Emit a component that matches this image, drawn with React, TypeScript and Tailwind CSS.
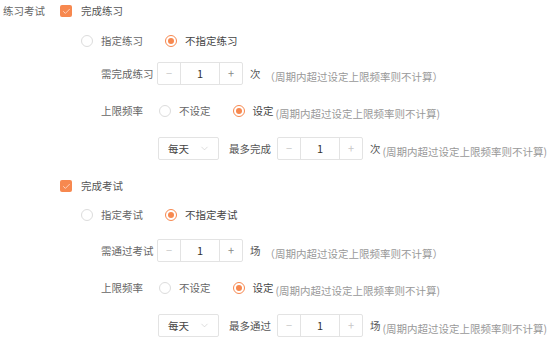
import { Check, ChevronDown } from 'lucide-react';

const font = { fontFamily: '"Noto Sans CJK SC", "Noto Sans", sans-serif' };

const CheckBox = ({ label }: { label: string }) => (
  <div className="flex items-center h-[22px] whitespace-nowrap">
    <span className="shrink-0 w-[12px] h-[12px] rounded-[2px] bg-[#f7884f] flex items-center justify-center">
      <Check className="w-[9px] h-[9px] text-white/80" strokeWidth={2} />
    </span>
    <span className="ml-[9px] text-[10.5px] text-[#555]">{label}</span>
  </div>
);

const Radio = ({ label, checked }: { label: string; checked?: boolean }) => (
  <div className="flex items-center shrink-0 whitespace-nowrap">
    <span
      className={`shrink-0 w-[12px] h-[12px] rounded-full border flex items-center justify-center ${
        checked ? 'border-[#f7884f]' : 'border-[#dcdcdc]'
      }`}
    >
      {checked && <span className="w-[6px] h-[6px] rounded-full bg-[#f7884f]" />}
    </span>
    <span className={`ml-[8px] text-[10.5px] ${checked ? 'text-[#444]' : 'text-[#666]'}`}>{label}</span>
  </div>
);

const Stepper = ({ active }: { active?: boolean }) => (
  <div className="shrink-0 flex h-[23px] w-[86px] border border-[#e3e3e3] rounded-[2px] text-[11px]">
    <span className="w-[23px] flex items-center justify-center text-[#c8c8c8] border-r border-[#e3e3e3]">−</span>
    <span className="flex-1 flex items-center justify-center text-[#333]">1</span>
    <span
      className={`w-[23px] flex items-center justify-center border-l border-[#e3e3e3] ${
        active ? 'text-[#888]' : 'text-[#c8c8c8]'
      }`}
    >
      +
    </span>
  </div>
);

const Select = () => (
  <div className="shrink-0 flex items-center h-[23px] w-[61px] border border-[#e3e3e3] rounded-[2px] pl-[9px] pr-[8px] justify-between">
    <span className="text-[10.5px] text-[#444]">每天</span>
    <ChevronDown className="w-[11px] h-[11px] text-[#c0c0c0]" strokeWidth={1.2} />
  </div>
);

const Hint = ({ children }: { children: React.ReactNode }) => (
  <span className="shrink-0 whitespace-nowrap text-[10.5px] text-[#999]">{children}</span>
);

const Section = ({
  title,
  picked,
  notPicked,
  need,
  unit,
  most,
  first,
}: {
  title: string;
  picked: string;
  notPicked: string;
  need: string;
  unit: string;
  most: string;
  first?: boolean;
}) => (
  <div className="whitespace-nowrap">
    <CheckBox label={title} />
    <div className="pl-[21px]">
      <div className={`flex items-center h-[22px] gap-[22px] ${first ? 'mt-[8px]' : 'mt-[7px]'}`}>
        <Radio label={picked} />
        <Radio label={notPicked} checked />
      </div>
      <div className={`flex items-center h-[23px] pl-[20px] ${first ? 'mt-[10px]' : 'mt-[13px]'}`}>
        <span className="shrink-0 w-[56px] text-[10.5px] text-[#666]">{need}</span>
        <Stepper active />
        <span className="ml-[7px] text-[10.5px] text-[#555]">{unit}</span>
        <span className="ml-[4px]">
          <Hint>（周期内超过设定上限频率则不计算）</Hint>
        </span>
      </div>
      <div className="flex items-center h-[22px] pl-[20px] mt-[15px]">
        <span className="shrink-0 w-[58px] text-[10.5px] text-[#666]">上限频率</span>
        <div className="flex items-center gap-[22px]">
          <Radio label="不设定" />
          <div className="flex items-center">
            <Radio label="设定" checked />
            <span className="ml-[2px]">
              <Hint>(周期内超过设定上限频率则不计算)</Hint>
            </span>
          </div>
        </div>
      </div>
      <div className="flex items-center h-[23px] pl-[77px] mt-[15px]">
        <Select />
        <span className="ml-[10px] text-[10.5px] text-[#555]">{most}</span>
        <span className="ml-[6px]">
          <Stepper />
        </span>
        <span className="ml-[7px] text-[10.5px] text-[#555]">{unit}</span>
        <span className="ml-[2px]">
          <Hint>(周期内超过设定上限频率则不计算)</Hint>
        </span>
      </div>
    </div>
  </div>
);

export default function App() {
  return (
    <div className="w-[553px] h-[346px] bg-white overflow-hidden" style={font}>
      <div className="flex pl-[3px]">
        <span className="shrink-0 w-[57px] h-[22px] flex items-center text-[10.5px] text-[#666]">练习考试</span>
        <div>
          <Section
            first
            title="完成练习"
            picked="指定练习"
            notPicked="不指定练习"
            need="需完成练习"
            unit="次"
            most="最多完成"
          />
          <div className="mt-[15px]">
            <Section
              title="完成考试"
              picked="指定考试"
              notPicked="不指定考试"
              need="需通过考试"
              unit="场"
              most="最多通过"
            />
          </div>
        </div>
      </div>
    </div>
  );
}
